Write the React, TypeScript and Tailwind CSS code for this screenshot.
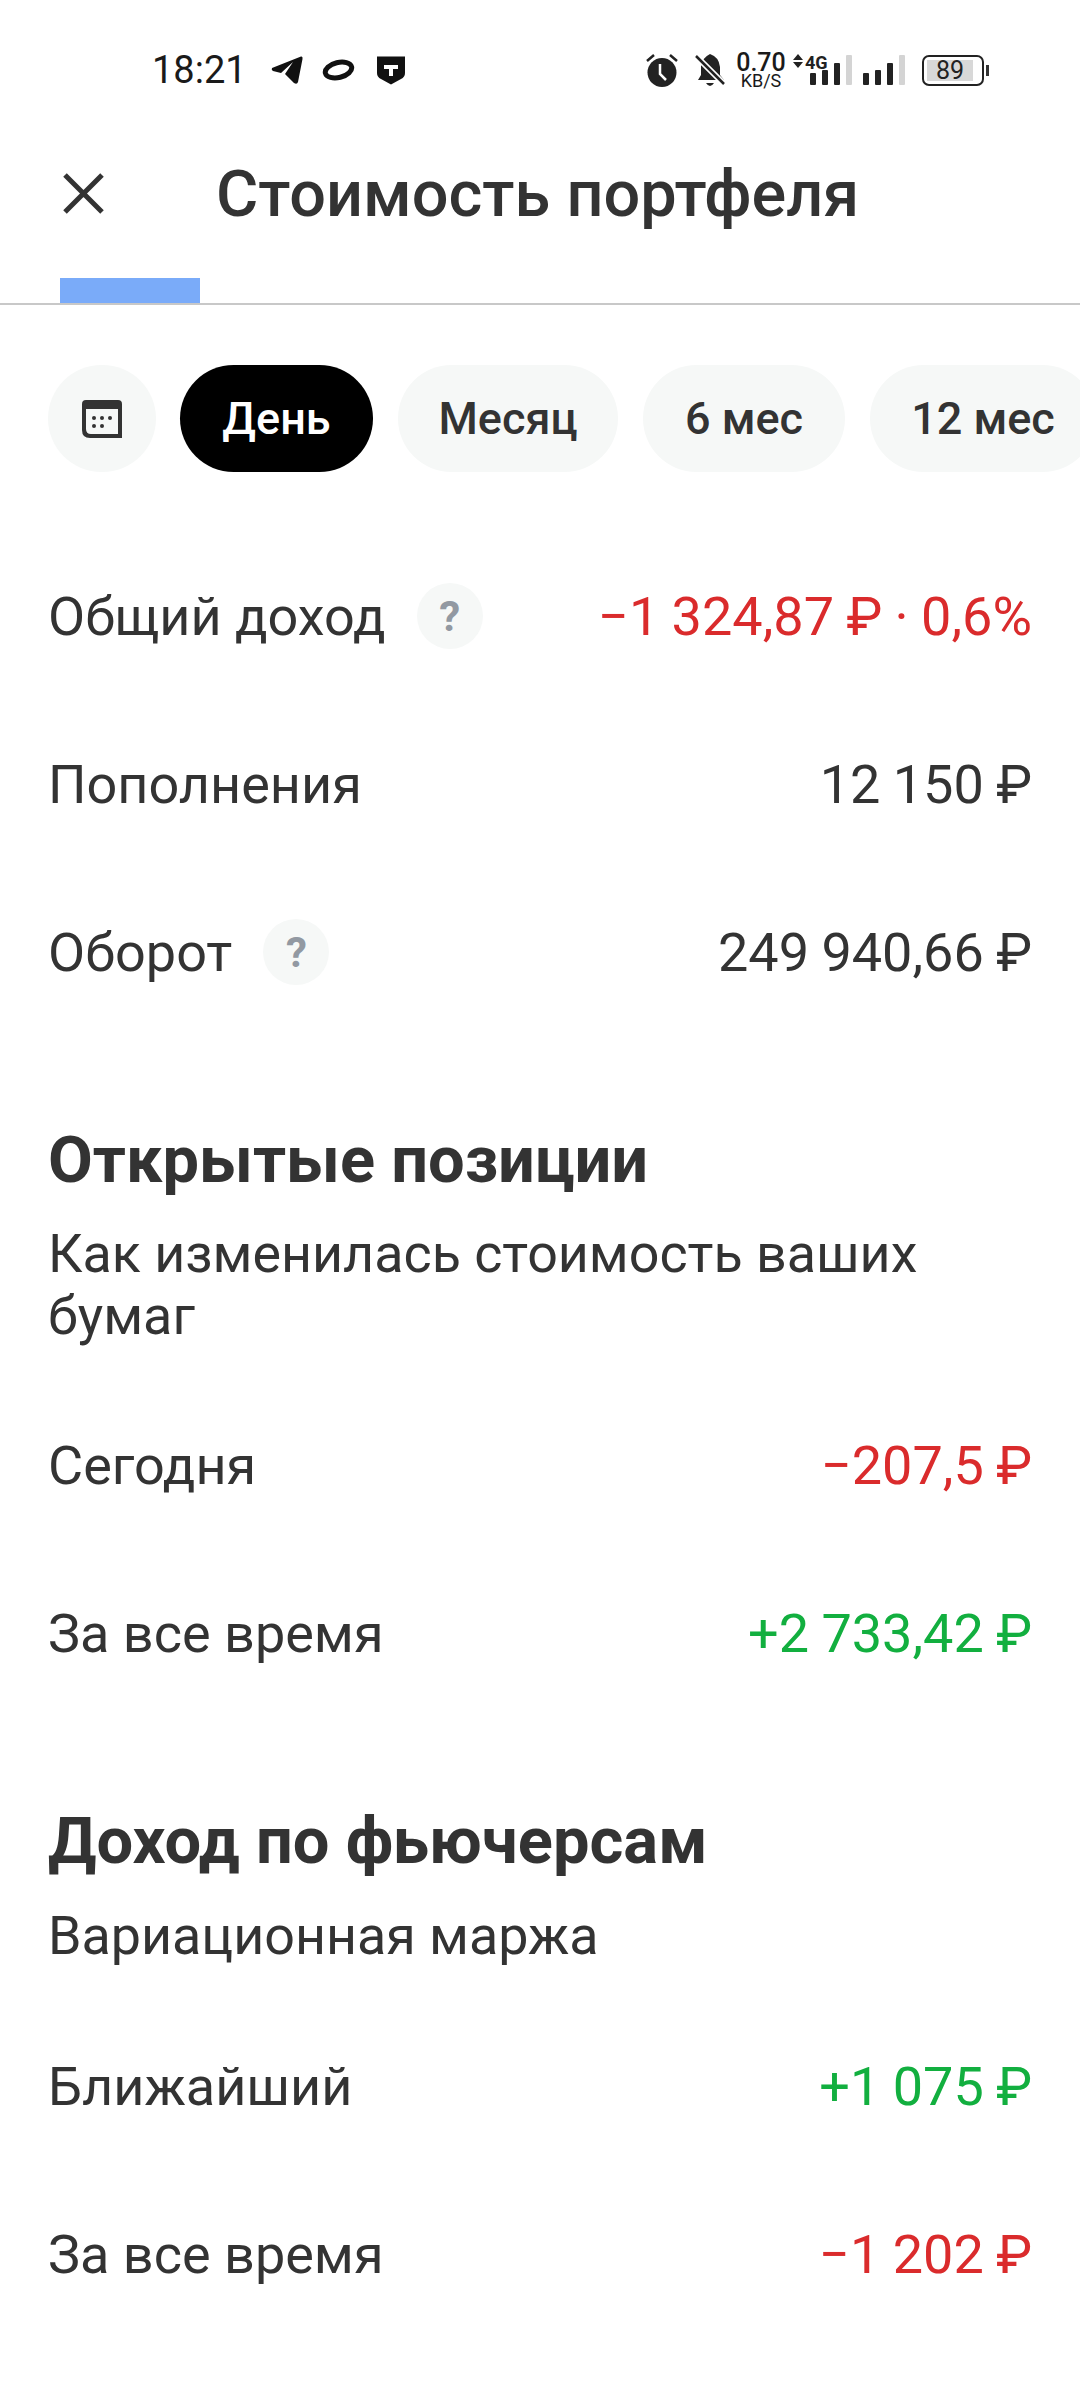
const red = 'text-[#da2b2c]';
const green = 'text-[#12af3f]';

function HelpDot({ className = '' }: { className?: string }) {
  return (
    <span className={`flex h-[66px] w-[66px] items-center justify-center rounded-full bg-[#f6f8f7] text-[42px] font-bold text-[#9299a2] ${className}`}>
      ?
    </span>
  );
}

function Row({ label, value, color = 'text-[#333333]', help }: { label: string; value: string; color?: string; help?: boolean }) {
  return (
    <div className="flex h-[168px] items-center justify-between">
      <div className="flex items-center">
        <span className="text-[54px] text-[#333333]">{label}</span>
        {help && <HelpDot className="ml-[31px]" />}
      </div>
      <span className={`text-[54px] [word-spacing:-1px] ${color}`}>{value}</span>
    </div>
  );
}

function Chip({ label, width, active }: { label: string; width: string; active?: boolean }) {
  return (
    <div className={`flex h-[107px] shrink-0 items-center justify-center rounded-full text-[45px] font-medium ${width} ${active ? 'bg-black text-white' : 'bg-[#f6f8f7] text-[#333333]'}`}>
      {label}
    </div>
  );
}

function StatusLeft() {
  return (
    <div className="flex items-center">
      <span className="text-[38px] leading-none text-[#1a1a1a]">18:21</span>
      <svg className="ml-[24px]" width="32" height="29" viewBox="0 0 32 29">
        <path d="M1 12 L30 0.500 Q32 0 31.500 3 L27 26 Q26 29 23 27 L14 18 L22 6 L10 17 L2 15 Q0 14 1 12Z" fill="#111" />
      </svg>
      <svg className="ml-[19px]" width="33" height="22" viewBox="0 0 33 22">
        <ellipse cx="16.500" cy="11" rx="13.500" ry="7.500" fill="none" stroke="#111" strokeWidth="5" transform="rotate(-14 16.500 11)" />
      </svg>
      <svg className="ml-[21px]" width="30" height="29" viewBox="0 0 30 29">
        <path d="M1 0.500 H29 V17 Q29 21 25 23 L15 28.500 L5 23 Q1 21 1 17Z" fill="#111" />
        <path d="M8 9 H22 V13 H17 V20 H13 V13 H8Z" fill="#fff" />
      </svg>
    </div>
  );
}

function StatusRight() {
  return (
    <div className="flex items-center">
      <svg width="32" height="34" viewBox="0 0 32 34">
        <circle cx="16" cy="19.500" r="14.500" fill="#222" />
        <path d="M14 11 V21 L20 27" fill="none" stroke="#fff" strokeWidth="2.500" />
        <path d="M1 8 L8 2 M31 8 L24 2" stroke="#222" strokeWidth="2.500" />
      </svg>
      <svg className="ml-[16px]" width="32" height="34" viewBox="0 0 32 34">
        <path d="M16 1 Q25 4 26 14 V22 L30 27 H4 L7 22 V13 Q8 5 16 1Z" fill="#222" />
        <path d="M12 30 H20 Q18 33 16 33 Q14 33 12 30Z" fill="#222" />
        <path d="M2 3 L30 31" stroke="#fff" strokeWidth="6" />
        <path d="M2 3 L30 31" stroke="#222" strokeWidth="2.500" />
      </svg>
      <div className="ml-[10px] flex w-[50px] flex-col items-center text-[#1a1a1a]">
        <span className="text-[25px] font-medium leading-[21px]">0.70</span>
        <span className="text-[18px] leading-[15px]">KB/S</span>
      </div>
      <svg className="ml-[6px] overflow-visible" width="62" height="32" viewBox="0 0 62 32">
        <path d="M6 0 L11 6 H1Z M6 14 L11 8 H1Z" fill="#222" />
        <text x="13" y="15" fontSize="18" fontWeight="700" fill="#222" fontFamily="Roboto, sans-serif">4G</text>
        <rect x="18" y="19" width="6" height="12" rx="1" fill="#222" />
        <rect x="30" y="16" width="6" height="15" rx="1" fill="#222" />
        <rect x="42" y="9" width="6" height="22" rx="1" fill="#222" />
        <rect x="54" y="1" width="6" height="30" rx="1" fill="#d4d4d4" />
      </svg>
      <svg className="ml-[8px]" width="44" height="32" viewBox="0 0 44 32">
        <rect x="1" y="19" width="6" height="12" rx="1" fill="#222" />
        <rect x="13" y="16" width="6" height="15" rx="1" fill="#222" />
        <rect x="25" y="9" width="6" height="22" rx="1" fill="#222" />
        <rect x="37" y="1" width="6" height="30" rx="1" fill="#d4d4d4" />
      </svg>
      <div className="ml-[16px] flex items-center">
        <div className="flex h-[31px] w-[62px] items-center rounded-[7px] border-2 border-[#222] py-[3px] pl-[3px]">
          <div className="flex h-full w-[46px] items-center justify-center bg-[#d8d8d8] text-[25px] leading-none text-[#222]">89</div>
        </div>
        <div className="ml-[2px] h-[11px] w-[3px] bg-[#333]" />
      </div>
    </div>
  );
}

export default function App() {
  return (
    <div className="h-[2400px] w-[1080px] overflow-hidden bg-white font-['Roboto',sans-serif] text-[#333333]">
      {/* Status bar */}
      <div className="flex h-[140px] items-center justify-between pl-[152px] pr-[91px]">
        <StatusLeft />
        <StatusRight />
      </div>

      {/* Header */}
      <div className="flex h-[108px] items-center pl-[61px]">
        <svg width="44" height="44" viewBox="0 0 44 44">
          <path d="M4 3 L41 40 M41 3 L4 40" stroke="#333" strokeWidth="5" />
        </svg>
        <h1 className="ml-[111px] text-[64.800px] font-medium leading-none">Стоимость портфеля</h1>
      </div>
      <div className="mt-[30px] h-[25px] pl-[60px]">
        <div className="h-full w-[140px] bg-[#7aabf9]" />
      </div>
      <div className="h-[2px] bg-[#c8c8c8]" />

      {/* Period chips */}
      <div className="mt-[60px] flex gap-[25px] overflow-hidden pl-[48px]">
        <div className="-mr-[1px] flex h-[107px] w-[108px] shrink-0 items-center justify-center rounded-full bg-[#f6f8f7]">
          <svg width="40" height="38" viewBox="0 0 40 38">
            <path d="M4 0 H36 Q40 0 40 4 V38 H8 Q0 38 0 30 V4 Q0 0 4 0Z M4 9 V29 Q4 34 9 34 H36 V9Z" fill="#333" fillRule="evenodd" />
            <circle cx="12" cy="18" r="2" fill="#333" /><circle cx="20" cy="18" r="2" fill="#333" /><circle cx="28" cy="18" r="2" fill="#333" />
            <circle cx="12" cy="26" r="2" fill="#333" /><circle cx="20" cy="26" r="2" fill="#333" />
          </svg>
        </div>
        <Chip label="День" width="w-[193px]" active />
        <Chip label="Месяц" width="w-[220px]" />
        <Chip label="6 мес" width="w-[202px]" />
        <Chip label="12 мес" width="w-[226px]" />
      </div>

      <div className="px-[48px] pt-[60px]">
        <Row label="Общий доход" value="−1 324,87 ₽ · 0,6%" color={red} help />
        <Row label="Пополнения" value="12 150 ₽" />
        <Row label="Оборот" value="249 940,66 ₽" help />

        <h2 className="mt-[89px] text-[65px] font-bold leading-[70px]">Открытые позиции</h2>
        <p className="mt-[28px] text-[53.800px] leading-[62px]">Как изменилась стоимость ваших бумаг</p>
        <div className="mt-[34px]">
          <Row label="Сегодня" value="−207,5 ₽" color={red} />
          <Row label="За все время" value="+2 733,42 ₽" color={green} />
        </div>

        <h2 className="mt-[89px] text-[65px] font-bold leading-[70px]">Доход по фьючерсам</h2>
        <p className="mt-[28px] text-[53.800px] leading-[63px]">Вариационная маржа</p>
        <div className="mt-[35px]">
          <Row label="Ближайший" value="+1 075 ₽" color={green} />
          <Row label="За все время" value="−1 202 ₽" color={red} />
        </div>
      </div>
    </div>
  );
}
